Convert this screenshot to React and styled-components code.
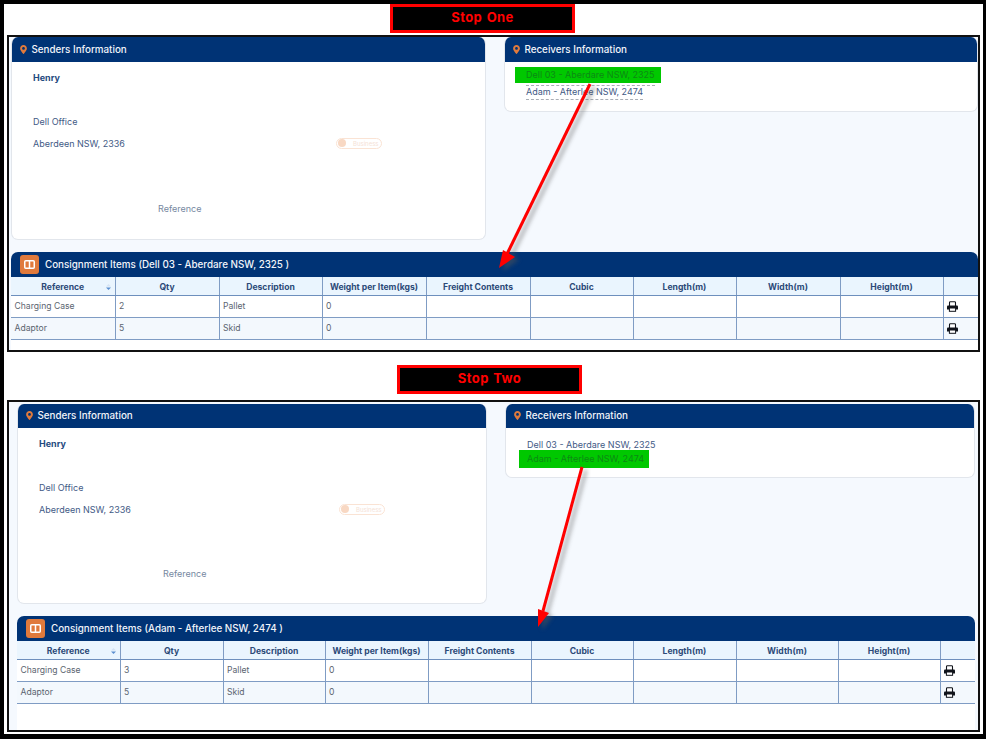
import React from 'react';
import styled, { createGlobalStyle } from 'styled-components';
import { FaMapMarkerAlt } from 'react-icons/fa';

const GlobalStyle = createGlobalStyle`
   html, body {
      margin: 0;
      padding: 0;
      background: #fff;
      font-family: "Inter", "Liberation Sans", sans-serif;
   }
`;

const Page = styled.div`
   position: relative;
   box-sizing: border-box;
   width: 986px;
   height: 739px;
   overflow: hidden;
   background: #fff;
   border-style: solid;
   border-color: #000;
   border-width: 4px 3px 5px 4px;
`;

const Banner = styled.div`
   box-sizing: border-box;
   width: 185px;
   height: 29px;
   margin-left: ${(props) => props.$left}px;
   margin-top: ${(props) => props.$top}px;
   padding-bottom: 4px;
   display: flex;
   align-items: center;
   justify-content: center;
   background: #000;
   border: 3px solid #f00;
   color: #f00;
   font-size: 13px;
   font-weight: 700;
   letter-spacing: 0.4px;
   word-spacing: 1px;
`;

const Frame = styled.div`
   box-sizing: border-box;
   width: 973px;
   height: ${(props) => props.$height}px;
   margin-left: 3px;
   margin-top: ${(props) => props.$top}px;
   padding: ${(props) => props.$padding};
   background: #f5f9fe;
   border: 2px solid #111;
   overflow: hidden;
`;

const TopRow = styled.div`
   display: grid;
   grid-template-columns: ${(props) => props.$columns};
   column-gap: 18px;
   align-items: start;
`;

const Panel = styled.section`
   box-sizing: border-box;
   background: #fff;
   border: 1px solid #e2e6ec;
   border-top: 0;
   border-radius: 7px;
   overflow: hidden;
   height: ${(props) => props.$height}px;
`;

const PanelHeader = styled.header`
   box-sizing: border-box;
   display: flex;
   align-items: center;
   gap: 4.5px;
   height: ${(props) => props.$height}px;
   margin: 0 -1px;
   padding: 0 0 1px 9px;
   background: #003375;
   color: #f2f5fa;
   font-size: 9.8px;
   font-weight: 500;
`;

const PinIcon = styled(FaMapMarkerAlt)`
   width: 7px;
   height: 9px;
   color: #e07a3c;
`;

const SenderBody = styled.div`
   position: relative;
   padding-left: 21px;
   font-size: 9px;
   color: #3f5a85;
`;

const SenderName = styled.div`
   margin-top: ${(props) => props.$top}px;
   line-height: 12px;
   font-weight: 700;
   color: #1f4a80;
`;

const SenderLine = styled.div`
   display: flex;
   align-items: center;
   margin-top: ${(props) => props.$top}px;
   height: 12px;
`;

const AddressText = styled.span`
   width: ${(props) => props.$width}px;
`;

const ReferenceLabel = styled.div`
   margin-top: ${(props) => props.$top}px;
   margin-left: ${(props) => props.$left}px;
   line-height: 12px;
   color: #76889f;
`;

const Toggle = styled.div`
   box-sizing: border-box;
   display: flex;
   align-items: center;
   width: 46px;
   height: 11px;
   padding-left: 1px;
   border: 1px solid #fae3d4;
   border-radius: 6px;
   color: #f5e2d6;
   font-size: 6px;
`;

const ToggleKnob = styled.span`
   width: 8px;
   height: 8px;
   margin-right: 7px;
   border-radius: 50%;
   background: #f8d8c3;
`;

const ReceiverBody = styled.div`
   display: flex;
   flex-direction: column;
   align-items: flex-start;
   padding-top: ${(props) => props.$top}px;
   padding-left: ${(props) => props.$left}px;
   font-size: 9px;
`;

const ReceiverRow = styled.div`
   box-sizing: border-box;
   height: ${(props) => props.$height || 14}px;
   line-height: ${(props) => (props.$dashed ? 12 : 14)}px;
   color: #3f5a85;
   white-space: nowrap;
   border-bottom: ${(props) => (props.$dashed ? '1px dashed #a9aeb5' : '0')};
`;

const Highlight = styled.div`
   box-sizing: border-box;
   height: ${(props) => props.$height}px;
   margin: ${(props) => props.$margin};
   padding: ${(props) => props.$padding};
   background: #00c800;
   color: #0c8a14;
   white-space: nowrap;
   line-height: ${(props) => props.$height}px;
`;

const ItemsPanel = styled.section`
   margin-top: ${(props) => props.$top}px;
   height: ${(props) => props.$height}px;
   background: #fff;
   border-radius: 7px 7px 0 0;
   overflow: hidden;
`;

const ItemsHeader = styled.header`
   display: flex;
   align-items: center;
   gap: 6px;
   height: 25px;
   padding-left: 9px;
   background: #003375;
   color: #f2f5fa;
   font-size: 9.8px;
   font-weight: 500;
   line-height: 22px;
`;

const ColumnsBadge = styled.span`
   display: flex;
   align-items: center;
   justify-content: center;
   width: 19px;
   height: 19px;
   border-radius: 3px;
   background: #e07a3c;
`;

const ItemsTable = styled.table`
   width: 100%;
   table-layout: fixed;
   border-collapse: collapse;
   font-size: 8.6px;
`;

const HeadCell = styled.th`
   position: relative;
   box-sizing: border-box;
   height: 18px;
   padding: 3px 0 0;
   background: #eaf5fe;
   border-right: 1px solid #7f9cc4;
   border-bottom: 1px solid #6d8fbd;
   color: #2c4a78;
   font-weight: 700;
   text-align: center;
   &:last-child {
      border-right: 0;
   }
`;

const SortMark = styled.svg`
   position: absolute;
   right: 4px;
   top: 7px;
   width: 5px;
   height: 6px;
`;

const Row = styled.tr`
   background: ${(props) => (props.$striped ? '#f3f8fd' : '#fff')};
`;

const Cell = styled.td`
   height: 21px;
   padding: 0 3.5px;
   border-right: 1px solid #7f9cc4;
   border-bottom: 1px solid #7f9cc4;
   color: #5b6470;
   &:last-child {
      border-right: 0;
   }
`;

const PrintSvg = styled.svg`
   display: block;
   width: 11px;
   height: 11px;
`;

const ArrowLayer = styled.svg`
   position: absolute;
   left: -4px;
   top: -4px;
   width: 986px;
   height: 739px;
   pointer-events: none;
`;

const PrintIcon = () => (
   <PrintSvg viewBox="0 0 11 11">
      <path d="M2.5 5V1.6q0-.9.9-.9h4.2q.9 0 .9.9V5" fill="#fff" stroke="#10131a" strokeWidth="1.1" />
      <path d="M0 5.6q0-1 1-1h9q1 0 1 1v2.9H0z" fill="#10131a" />
      <rect x="2.4" y="7" width="6.2" height="3.3" fill="#fff" stroke="#10131a" strokeWidth="1" />
   </PrintSvg>
);

const Arrow = ({ x1, y1, x2, y2, head }) => (
   <g>
      <g transform="translate(4 3)" opacity="0.5" filter="url(#arrowBlur)">
         <line x1={x1} y1={y1} x2={x2} y2={y2} stroke="#555" strokeWidth="3" />
         <polygon points={head} fill="#555" />
      </g>
      <line x1={x1} y1={y1} x2={x2} y2={y2} stroke="#f00" strokeWidth="3" />
      <polygon points={head} fill="#f00" />
   </g>
);

const COLUMNS = ['Reference', 'Qty', 'Description', 'Weight per Item(kgs)', 'Freight Contents', 'Cubic', 'Length(m)', 'Width(m)', 'Height(m)', ''];

const Items = ({ title, widths, rows, top, height }) => (
   <ItemsPanel $top={top} $height={height}>
      <ItemsHeader>
         <ColumnsBadge>
            <svg width="11" height="9" viewBox="0 0 11 9">
               <rect x="0.75" y="0.75" width="9.5" height="7.5" rx="1" fill="none" stroke="#fff" strokeWidth="1.5" />
               <rect x="4.75" y="1" width="1.5" height="7" fill="#fff" />
            </svg>
         </ColumnsBadge>
         {title}
      </ItemsHeader>
      <ItemsTable>
         <colgroup>
            {widths.map((width, index) => <col key={index} width={width} />)}
         </colgroup>
         <thead>
            <tr>
               {COLUMNS.map((name, index) => (
                  <HeadCell key={index}>
                     {name}
                     {index === 0 && (
                        <SortMark viewBox="0 0 5 6">
                           <path d="M0 3.5h5L2.5 6z" fill="#5b8fd0" />
                           <path d="M0 2.5h5L2.5 0z" fill="#d5e3f3" />
                        </SortMark>
                     )}
                  </HeadCell>
               ))}
            </tr>
         </thead>
         <tbody>
            {rows.map((row, index) => (
               <Row key={row.reference} $striped={index % 2 === 1}>
                  <Cell>{row.reference}</Cell>
                  <Cell>{row.qty}</Cell>
                  <Cell>{row.description}</Cell>
                  <Cell>0</Cell>
                  <Cell />
                  <Cell />
                  <Cell />
                  <Cell />
                  <Cell />
                  <Cell><PrintIcon /></Cell>
               </Row>
            ))}
         </tbody>
      </ItemsTable>
   </ItemsPanel>
);

const App = () => (
   <Page>
      <GlobalStyle />

      <Banner $left={386} $top={0}>Stop One</Banner>
      <Frame $height={317} $top={2} $padding="0 0 0 2px">
         <TopRow $columns="475px 474px">
            <Panel $height={203}>
               <PanelHeader $height={25}><PinIcon />Senders Information</PanelHeader>
               <SenderBody>
                  <SenderName $top={10}>Henry</SenderName>
                  <SenderLine $top={31}>Dell Office</SenderLine>
                  <SenderLine $top={10}>
                     <AddressText $width={303}>Aberdeen NSW, 2336</AddressText>
                     <Toggle><ToggleKnob />Business</Toggle>
                  </SenderLine>
                  <ReferenceLabel $top={54} $left={125}>Reference</ReferenceLabel>
               </SenderBody>
            </Panel>
            <Panel $height={75}>
               <PanelHeader $height={25}><PinIcon />Receivers Information</PanelHeader>
               <ReceiverBody $top={5} $left={21}>
                  <ReceiverRow $dashed $height={19}>
                     <Highlight $height={16} $margin="0 -6px 0 -11px" $padding="0 6px 0 11px">Dell 03 - Aberdare NSW, 2325</Highlight>
                  </ReceiverRow>
                  <ReceiverRow $dashed>Adam - Afterlee NSW, 2474</ReceiverRow>
               </ReceiverBody>
            </Panel>
         </TopRow>
         <Items
            title="Consignment Items (Dell 03 - Aberdare NSW, 2325 )"
            widths={[104, 104, 103, 104, 104, 103, 103, 104, 103, 35]}
            rows={[
               { reference: 'Charging Case', qty: 2, description: 'Pallet' },
               { reference: 'Adaptor', qty: 5, description: 'Skid' },
            ]}
            top={12}
            height={98}
         />
      </Frame>

      <Banner $left={393} $top={13}>Stop Two</Banner>
      <Frame $height={332} $top={6} $padding="2px 3px 0 8px">
         <TopRow $columns="470px 470px">
            <Panel $height={200}>
               <PanelHeader $height={24}><PinIcon />Senders Information</PanelHeader>
               <SenderBody>
                  <SenderName $top={10}>Henry</SenderName>
                  <SenderLine $top={31}>Dell Office</SenderLine>
                  <SenderLine $top={10}>
                     <AddressText $width={300}>Aberdeen NSW, 2336</AddressText>
                     <Toggle><ToggleKnob />Business</Toggle>
                  </SenderLine>
                  <ReferenceLabel $top={53} $left={124}>Reference</ReferenceLabel>
               </SenderBody>
            </Panel>
            <Panel $height={74}>
               <PanelHeader $height={24}><PinIcon />Receivers Information</PanelHeader>
               <ReceiverBody $top={10} $left={21}>
                  <ReceiverRow>Dell 03 - Aberdare NSW, 2325</ReceiverRow>
                  <Highlight $height={18} $margin="-2px 0 0 -8px" $padding="0 5px 0 8px">Adam - Afterlee NSW, 2474</Highlight>
               </ReceiverBody>
            </Panel>
         </TopRow>
         <Items
            title="Consignment Items (Adam - Afterlee NSW, 2474 )"
            widths={[103, 103, 102, 103, 103, 102, 103, 102, 102, 35]}
            rows={[
               { reference: 'Charging Case', qty: 3, description: 'Pallet' },
               { reference: 'Adaptor', qty: 5, description: 'Skid' },
            ]}
            top={12}
            height={114}
         />
      </Frame>

      <ArrowLayer viewBox="0 0 986 739">
         <defs>
            <filter id="arrowBlur"><feGaussianBlur stdDeviation="2" /></filter>
         </defs>
         <Arrow x1={590} y1={84} x2={507} y2={254} head="499,268 503,250 515,257" />
         <Arrow x1={582} y1={467} x2={543} y2={611} head="538,627 538,609 549,613" />
      </ArrowLayer>
   </Page>
);

export default App;
